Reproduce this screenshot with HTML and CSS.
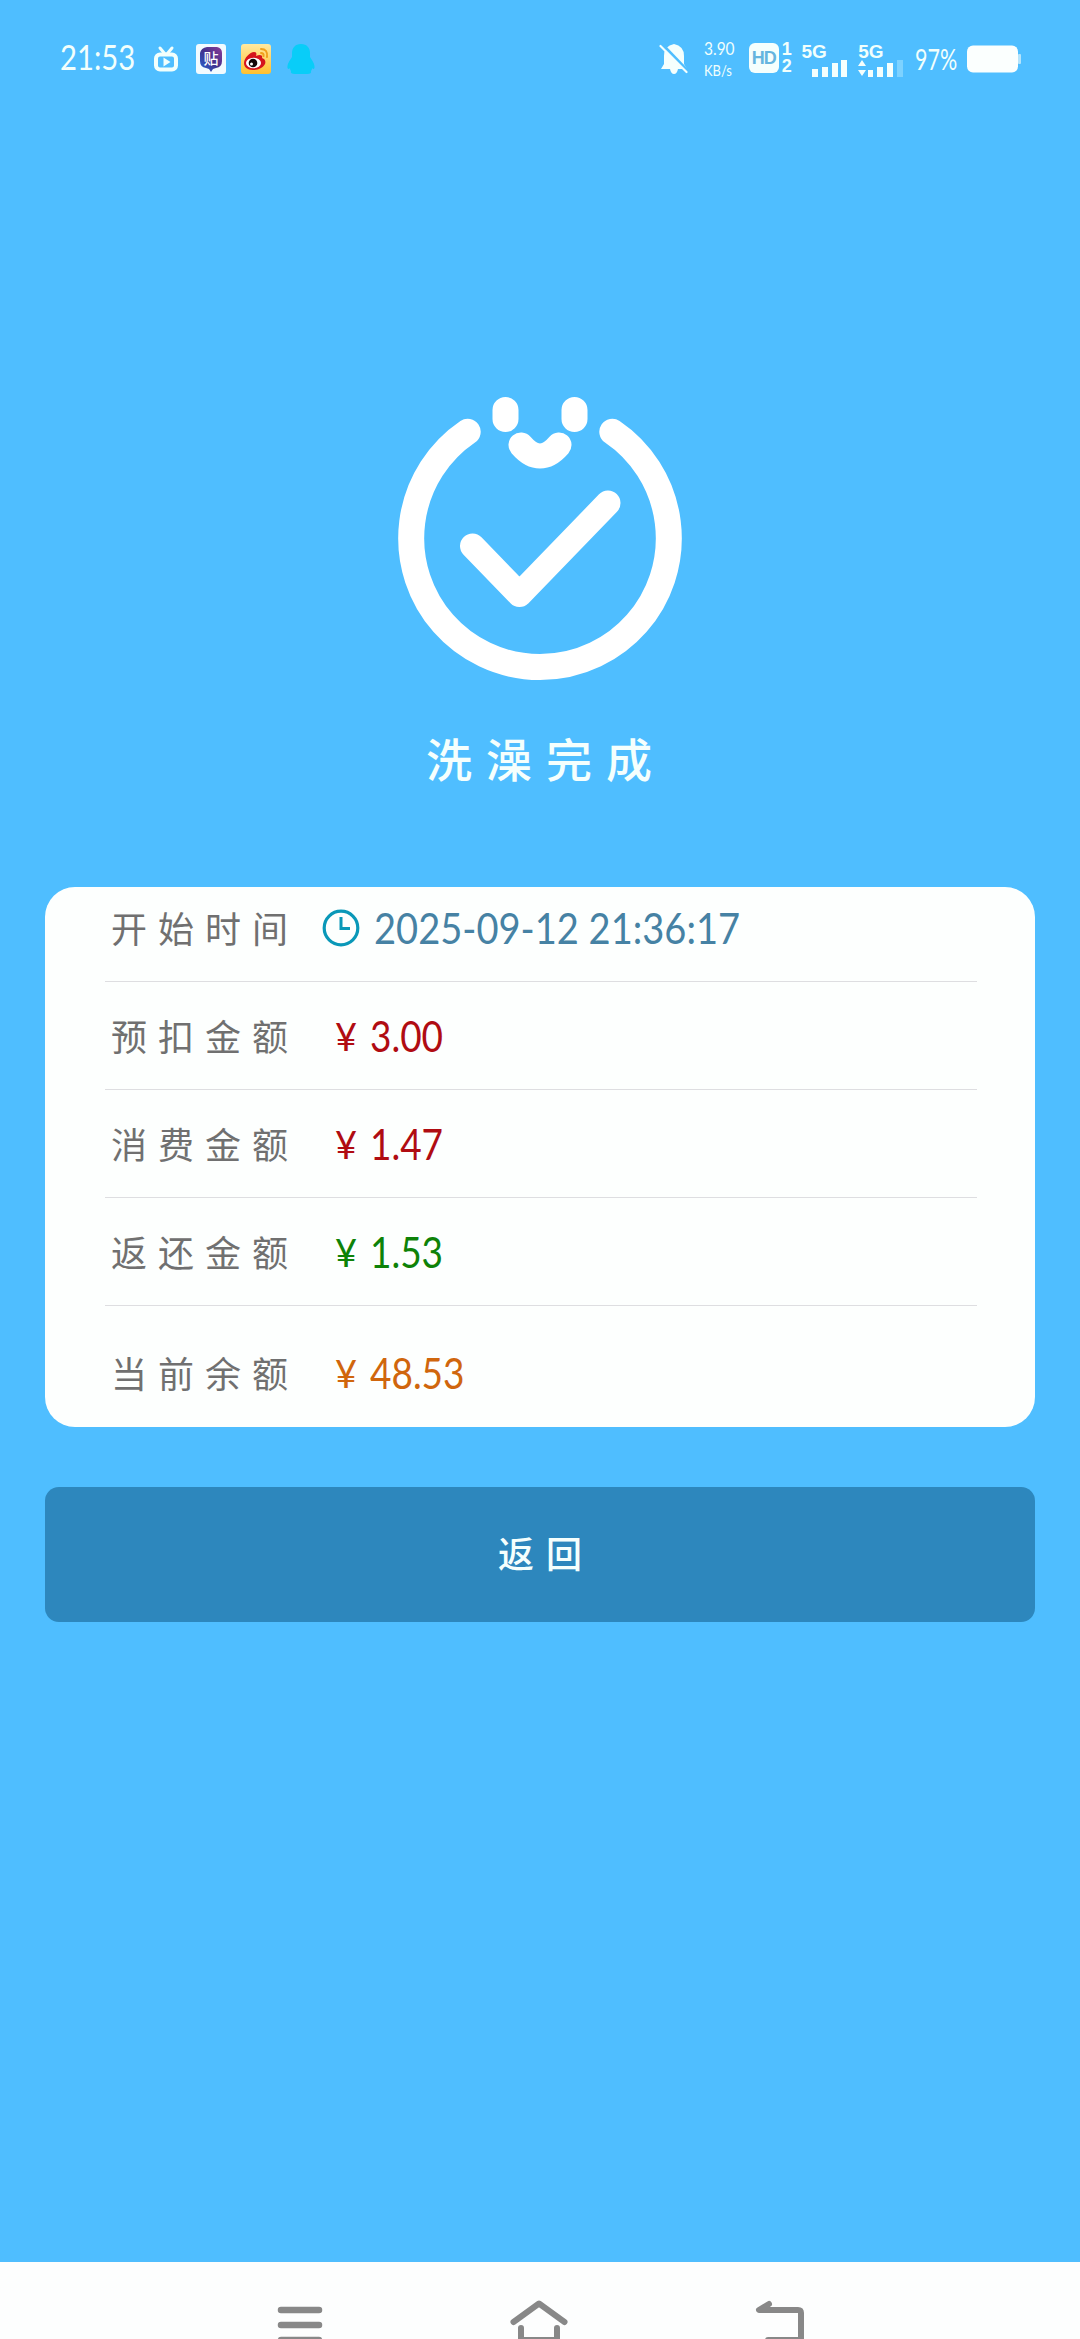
FILE: index.html
```html
<!DOCTYPE html>
<html lang="zh-CN">
<head>
<meta charset="utf-8">
<title>洗澡完成</title>
<link rel="stylesheet" href="styles.css">
</head>
<body>
<header class="status">
  <div class="status-left">
    <span class="fit clock"><span>21:53</span></span>
    <svg class="ic-tv" width="26" height="28" viewBox="0 0 26 28"><path d="M7 3l5 6M19 3l-5 6" stroke="#f2fffc" stroke-width="3" stroke-linecap="round"/><rect x="3" y="9.500" width="20" height="15" rx="4" fill="none" stroke="#f2fffc" stroke-width="4"/><path d="M10.500 12.500v9l7-4.500z" fill="#f2fffc"/></svg>
    <svg class="ic-tieba" width="30" height="30" viewBox="0 0 30 30"><defs><linearGradient id="tb" x1="0" y1="1" x2="1" y2="0"><stop offset="0" stop-color="#2468d8"/><stop offset=".5" stop-color="#42318c"/><stop offset="1" stop-color="#8d3c98"/></linearGradient></defs><rect width="30" height="30" rx="3" fill="#f2fbff"/><path d="M11 3h10q5 1 5 6v8q0 6-6 7l-3 1-2 3-2-3-3-1q-6-1-6-7V9q1-5 7-6z" fill="url(#tb)"/><text x="15" y="20" text-anchor="middle" class="tb-text">贴</text></svg>
    <svg class="ic-weibo" width="30" height="30" viewBox="0 0 30 30"><defs><linearGradient id="wb" x1="0" y1="0" x2="0" y2="1"><stop offset="0" stop-color="#ffe9a0"/><stop offset="1" stop-color="#ffc02e"/></linearGradient></defs><rect width="30" height="30" rx="3" fill="url(#wb)"/><path d="M3 19c0-5 6-11 10-11 2 0 3 1 2 4 4-2 7-1 6 2 3 1 4 3 3 6-2 4-7 6-12 6-6 0-9-3-9-7z" fill="#d5141c"/><ellipse cx="12.500" cy="19" rx="7.500" ry="5.300" fill="#fff"/><circle cx="12" cy="19" r="4.300" fill="#15080a"/><circle cx="10.500" cy="20" r="1.500" fill="#fff"/><path d="M20 5q7 0 6 8M20 9q3 0 2.500 3" fill="none" stroke="#f0a01c" stroke-width="2" stroke-linecap="round"/></svg>
    <svg class="ic-qq" width="28" height="32" viewBox="0 0 28 32"><path d="M14 1c6 0 9 4 9 9v4c2 3 5 7 4.500 11q-1 2-2.500 0 0 2-1 3 1 3-4 3H8q-5 0-4-3-1-1-1-3-1.500 2-2.500 0C0 21 3 17 5 14v-4c0-5 3-9 9-9z" fill="#09cdf8"/></svg>
  </div>
  <div class="status-right">
    <svg class="ic-bell" width="30" height="34" viewBox="0 0 30 34"><path d="M15 2q10 2 10 12v8l3 5H2l3-5v-8Q5 4 15 2z" fill="#f5fffd"/><path d="M11 27h8q-1 5-4 5t-4-5z" fill="#f5fffd"/><path d="M3 2l26 27" stroke="#4fbeff" stroke-width="3"/><path d="M1.500 4l26 26" stroke="#f5fffd" stroke-width="2.200" stroke-linecap="round"/></svg>
    <div class="speed"><span class="fit"><span>3.90</span></span><span class="fit unit"><span>KB/s</span></span></div>
    <div class="hd"><b class="hd-box">HD</b><span class="hd-sims"><b>1</b><b>2</b></span></div>
    <div class="signal"><b>5G</b><svg width="36" height="18" viewBox="0 0 36 18"><path d="M0 10h6v8H0zM10 8h6v10h-6zM20 4h6v14h-6zM29 1h6v17h-6z" fill="#f5fffd"/></svg></div>
    <div class="signal second"><b>5G</b><svg width="46" height="18" viewBox="0 0 46 18"><path d="M0 7h8L4 1zM0 11h8l-4 6zM10 11h5v7h-5zM19 8h6v10h-6zM29 4h6v14h-6z" fill="#f5fffd"/><path d="M39 1h6v17h-6z" fill="#7dd2ff"/></svg></div>
    <span class="fit percent"><span>97%</span></span>
    <svg class="ic-battery" width="55" height="28" viewBox="0 0 55 28"><rect x="0" y="0.500" width="51" height="27" rx="6" fill="#fbfffe"/><rect x="51" y="9" width="3" height="10" rx="1" fill="#b5e4fb"/></svg>
  </div>
</header>

<main class="page">
  <svg class="logo" width="288" height="288" viewBox="396 395 288 288" fill="none" stroke="#fff" stroke-linecap="round" stroke-linejoin="round">
    <path d="M467.700 431.700A128.800 128.800 0 1 0 612.300 431.700" stroke-width="26"/>
    <path d="M472.500 546L519.500 594.500 608 503" stroke-width="25"/>
    <path d="M521 445Q540 467 559 445" stroke-width="25"/>
    <path d="M505.500 410v9M574.500 410v9" stroke-width="26"/>
  </svg>
  <h1 class="title">洗澡完成</h1>

  <section class="card">
    <div class="row first"><span class="label">开始时间</span><svg class="ic-clock" width="38" height="38" viewBox="0 0 38 38" fill="none" stroke="#0a98b8"><circle cx="19" cy="19" r="16.800" stroke-width="3.200"/><path d="M19 8v11.500h9" stroke-width="3"/></svg><span class="fit date"><span>2025-09-12 21:36:17</span></span></div>
    <div class="row red"><span class="label">预扣金额</span><span class="yen">¥</span><span class="fit"><span>3.00</span></span></div>
    <div class="row red"><span class="label">消费金额</span><span class="yen">¥</span><span class="fit"><span>1.47</span></span></div>
    <div class="row green"><span class="label">返还金额</span><span class="yen">¥</span><span class="fit"><span>1.53</span></span></div>
    <div class="row orange last"><span class="label">当前余额</span><span class="yen">¥</span><span class="fit"><span>48.53</span></span></div>
  </section>

  <button class="back">返回</button>
</main>

<nav class="nav">
  <svg width="46" height="42" viewBox="277 2297 46 42" stroke="#888" stroke-width="6.500" stroke-linecap="round"><path d="M281 2310h38M281 2325h38M281 2340h38"/></svg>
  <svg width="60" height="42" viewBox="510 2297 60 42" fill="none" stroke="#888" stroke-width="6" stroke-linecap="round" stroke-linejoin="round"><path d="M514.500 2322L540 2303.500 565.500 2322M522 2328v12h36v-12"/></svg>
  <svg width="50" height="42" viewBox="755 2297 50 42" fill="none" stroke="#888" stroke-width="6" stroke-linecap="round" stroke-linejoin="round"><path d="M769 2304L759 2310H798q3 0 3 3v27H768"/></svg>
</nav>
</body>
</html>
```
FILE: styles.css
```css
* { box-sizing: border-box; }
body {
  margin: 0;
  width: 1080px;
  height: 2339px;
  overflow: hidden;
  display: flex;
  flex-direction: column;
  background: #4fbeff;
  font-family: Lato, "Noto Sans CJK SC", sans-serif;
}
svg { display: block; flex: none; }

/* condensed numerals */
.fit { display: block; flex: none; white-space: nowrap; }
.fit > span { display: inline-block; transform-origin: 0 50%; transform: scaleX(.86); }

.status {
  height: 118px;
  flex: none;
  display: flex;
  justify-content: space-between;
  align-items: center;
  padding: 0 58px 0 60px;
  color: #f2fffc;
}
.status-left, .status-right { display: flex; align-items: center; }
.clock { width: 93px; font-size: 34px; line-height: 40px; font-weight: 400; margin-top: -4px; }
.ic-tieba { margin-left: 17px; }
.ic-weibo { margin-left: 15px; }
.ic-qq { margin-left: 16px; }
.tb-text { font: 500 15px "Noto Sans CJK SC", sans-serif; fill: #fff; }
.status-right { width: 363px; }
.speed { width: 45px; margin-left: 15px; font-size: 18px; line-height: 22px; }
.speed .unit { font-size: 15px; }
.hd { display: flex; width: 53px; gap: 3px; }
.hd-box { width: 30px; height: 30px; border-radius: 6px; background: #f5fffd; color: #65b5df; font: 700 18px/30px "Liberation Sans", sans-serif; letter-spacing: -1px; text-align: center; }
.hd-sims { display: flex; flex-direction: column; font: 700 18px/17px "Liberation Sans", sans-serif; margin-top: -2px; }
.signal { width: 57px; display: flex; flex-direction: column; font: 700 19px/19px "Liberation Sans", sans-serif; height: 34px; }
.signal svg { margin: -2px 0 0 10px; }
.signal.second svg { margin-left: 0; }
.percent { width: 52px; font-size: 29px; line-height: 36px; font-weight: 400; }
.percent > span { transform: scaleX(.74); }

.page {
  flex: 1;
  display: flex;
  flex-direction: column;
  align-items: center;
  padding-top: 277px;
}
.title {
  margin: 43px 0 0;
  height: 68px;
  line-height: 68px;
  font-size: 46px;
  font-weight: 500;
  letter-spacing: 14px;
  padding-left: 12px;
  color: #f5fffd;
}
.card {
  width: 990px;
  height: 540px;
  margin-top: 93px;
  padding: 0 58px 0 60px;
  border-radius: 30px;
  background: #fdfffe;
}
.row {
  height: 108px;
  display: flex;
  align-items: center;
  padding-left: 6px;
  border-bottom: 1px solid #dedee1;
  font-size: 43px;
  font-weight: 400;
  line-height: 54px;
}
.first { height: 95px; padding-bottom: 13px; }
.last { height: 121px; border: 0; padding-top: 12px; }
.label {
  width: 224px;
  margin-top: -2px;
  font-family: "Noto Sans CJK SC", sans-serif;
  font-size: 36px;
  letter-spacing: 11px;
  color: #707070;
}
.first .label { width: 211px; }
.date { margin-left: 14px; color: #4682a4; }
.date > span { transform: scaleX(.885); }
.yen { width: 35px; font-size: 38px; }
.red { color: #b00c12; }
.green { color: #0e8208; }
.orange { color: #d0660d; }
.back {
  width: 990px;
  height: 135px;
  margin-top: 60px;
  padding: 0 0 6px 12px;
  border: 0;
  border-radius: 14px;
  background: #2d87bd;
  color: #f5fffd;
  font: 500 36px "Noto Sans CJK SC", sans-serif;
  letter-spacing: 12px;
}

.nav {
  height: 77px;
  flex: none;
  display: flex;
  align-items: flex-end;
  justify-content: space-between;
  padding: 0 275px 0 277px;
  background: #fdfefe;
}
```
